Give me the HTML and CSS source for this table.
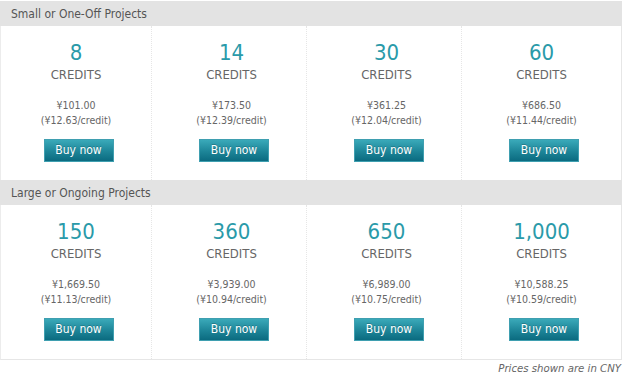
FILE: index.html
```html
<!DOCTYPE html>
<html>
<head>
<meta charset="utf-8">
<link rel="stylesheet" href="styles.css">
</head>
<body>
<div class="pricing">
  <div class="group">
    <div class="group-head">Small or One-Off Projects</div>
    <div class="grid">
      <div class="cell"><div class="num">8</div><div class="unit">CREDITS</div><div class="price">¥101.00<br>(¥12.63/credit)</div><a class="buy">Buy now</a></div>
      <div class="cell"><div class="num">14</div><div class="unit">CREDITS</div><div class="price">¥173.50<br>(¥12.39/credit)</div><a class="buy">Buy now</a></div>
      <div class="cell"><div class="num">30</div><div class="unit">CREDITS</div><div class="price">¥361.25<br>(¥12.04/credit)</div><a class="buy">Buy now</a></div>
      <div class="cell"><div class="num">60</div><div class="unit">CREDITS</div><div class="price">¥686.50<br>(¥11.44/credit)</div><a class="buy">Buy now</a></div>
    </div>
  </div>
  <div class="group">
    <div class="group-head">Large or Ongoing Projects</div>
    <div class="grid last">
      <div class="cell"><div class="num">150</div><div class="unit">CREDITS</div><div class="price">¥1,669.50<br>(¥11.13/credit)</div><a class="buy">Buy now</a></div>
      <div class="cell"><div class="num">360</div><div class="unit">CREDITS</div><div class="price">¥3,939.00<br>(¥10.94/credit)</div><a class="buy">Buy now</a></div>
      <div class="cell"><div class="num">650</div><div class="unit">CREDITS</div><div class="price">¥6,989.00<br>(¥10.75/credit)</div><a class="buy">Buy now</a></div>
      <div class="cell"><div class="num">1,000</div><div class="unit">CREDITS</div><div class="price">¥10,588.25<br>(¥10.59/credit)</div><a class="buy">Buy now</a></div>
    </div>
  </div>
  <div class="note">Prices shown are in CNY</div>
</div>
</body>
</html>
```
FILE: styles.css
```css
html, body {
  margin: 0;
  padding: 0;
  background: #ffffff;
}
body {
  font-family: "DejaVu Sans Condensed", "DejaVu Sans", sans-serif;
  color: #666666;
}
.pricing {
  width: 622px;
  padding-top: 1px;
}
.group-head {
  height: 24px;
  padding: 1px 0 0 11px;
  line-height: 24px;
  font-size: 12px;
  color: #555555;
  background: #e3e3e3;
}
.grid {
  display: grid;
  grid-template-columns: 151px 155px 155px 159px;
  border-left: 1px solid #ececec;
  border-right: 1px solid #e6e6e6;
}
.grid.last {
  border-bottom: 1px solid #e6e6e6;
}
.cell {
  padding: 15px 0 18px 0;
  text-align: center;
  border-right: 1px dotted #e6e6e6;
}
.cell + .cell {
  padding-left: 5px;
}
.cell:last-child {
  border-right: none;
  padding-left: 0;
}
.num {
  font-size: 22px;
  line-height: 24px;
  color: #2a9aa9;
}
.unit {
  font-size: 13px;
  line-height: 20px;
  color: #666666;
}
.price {
  margin-top: 13px;
  font-size: 10.5px;
  line-height: 15px;
  color: #666666;
}
.buy {
  display: inline-block;
  box-sizing: border-box;
  width: 70px;
  height: 23px;
  margin: 11px 0 0 5px;
  line-height: 21px;
  font-size: 12px;
  color: #ffffff;
  border: 1px solid #3f9fb0;
  background: linear-gradient(#3aa9b9, #1d8598 55%, #0b6b80);
  text-shadow: 0 -1px 0 rgba(0,0,0,0.2);
}
.note {
  padding: 2px 1px 0 0;
  text-align: right;
  font-size: 11.3px;
  font-style: italic;
  line-height: 14px;
  color: #666666;
}
```
